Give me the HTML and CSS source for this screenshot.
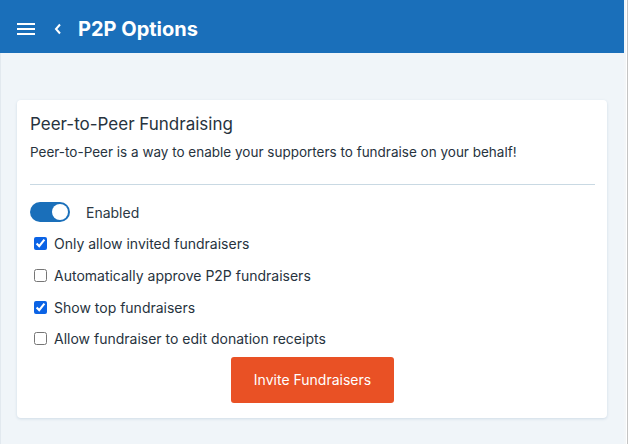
FILE: index.html
```html
<!DOCTYPE html>
<html>

<head>
    <meta charset="UTF-8">
    <title>P2P Options</title>
    <link rel="stylesheet" href="styles.css">
</head>

<body>
    <div class="frame">
        <div class="app">
            <!-- top bar -->
            <header class="topbar">
                <svg class="icon-menu" width="18" height="14" viewBox="0 0 18 14">
                    <rect x="0" y="1" width="18" height="2" fill="#fff"/>
                    <rect x="0" y="6" width="18" height="2" fill="#fff"/>
                    <rect x="0" y="11" width="18" height="2" fill="#fff"/>
                </svg>
                <svg class="icon-back" width="8" height="12" viewBox="0 0 8 12">
                    <path d="M6 1.5 L2 6 L6 10.5" fill="none" stroke="#fff" stroke-width="2"/>
                </svg>
                <h1>P2P Options</h1>
            </header>

            <main class="content">
                <section class="card">
                    <h2>Peer-to-Peer Fundraising</h2>
                    <p class="desc">Peer-to-Peer is a way to enable your supporters to fundraise on your behalf!</p>
                    <hr class="divider">

                    <div class="toggle-row">
                        <span class="toggle"><span class="knob"></span></span>
                        <span class="toggle-label">Enabled</span>
                    </div>

                    <label class="check"><input type="checkbox" checked> Only allow invited fundraisers</label>
                    <label class="check"><input type="checkbox"> Automatically approve P2P fundraisers</label>
                    <label class="check"><input type="checkbox" checked> Show top fundraisers</label>
                    <label class="check"><input type="checkbox"> Allow fundraiser to edit donation receipts</label>

                    <div class="actions">
                        <button type="button" class="btn-invite">Invite Fundraisers</button>
                    </div>
                </section>
            </main>
        </div>
        <div class="edge"></div>
    </div>
</body>

</html>
```

FILE: styles.css
```css
html, body {
    margin: 0;
    height: 100%;
}

body {
    background-color: #ffffff;
    font-family: Inter, "Noto Sans", sans-serif;
    color: #2b3844;
}

.frame {
    display: flex;
    height: 444px;
    overflow: hidden;
}

.app {
    width: 624px;
    background-color: #f0f5f9;
    border-left: 1px solid #e2e9ef;
    box-sizing: border-box;
}

.edge {
    width: 5px;
    border-left: 2px solid #f3f6f8;
    box-sizing: border-box;
}

.edge::after {
    content: "";
    display: block;
    width: 1px;
    height: 100%;
    margin-left: 1px;
    background-color: #c4c4c4;
}

.topbar {
    height: 53px;
    box-sizing: border-box;
    background-color: #1a6fba;
    display: flex;
    align-items: center;
    padding: 4px 0 0 17px;
    margin-left: -1px;
}

.icon-menu {
    display: block;
}

.icon-back {
    display: block;
    margin-left: 19px;
}

.topbar h1 {
    margin: 0 0 0 16px;
    color: #ffffff;
    font-size: 20px;
    font-weight: 700;
}

.content {
    padding: 47px 17px 0 16px;
}

.card {
    background-color: #ffffff;
    border-radius: 4px;
    box-shadow: 0 1px 3px rgba(30, 80, 130, 0.15);
    padding: 13px 12px 15px 13px;
    height: 318px;
    box-sizing: border-box;
}

.card h2 {
    margin: 0;
    font-size: 17px;
    font-weight: 400;
    line-height: 22px;
    color: #27333e;
}

.desc {
    margin: 8px 0 0;
    font-size: 13.5px;
    line-height: 18px;
    color: #27333e;
}

.divider {
    border: 0;
    border-top: 1px solid #c9d9e3;
    margin: 23px 0 0;
}

.toggle-row {
    display: flex;
    align-items: center;
    margin-top: 17px;
    height: 20px;
}

.toggle {
    width: 40px;
    height: 20px;
    border-radius: 10px;
    background-color: #1a6fba;
    display: flex;
    align-items: center;
    justify-content: flex-end;
    padding: 0 2px;
    box-sizing: border-box;
}

.knob {
    width: 16px;
    height: 16px;
    border-radius: 50%;
    background-color: #ffffff;
}

.toggle-label {
    margin-left: 16px;
    font-size: 14px;
    color: #2b3844;
}

.check {
    display: flex;
    align-items: center;
    height: 31.7px;
    font-size: 14px;
    color: #27333e;
    padding-left: 4px;
}

.check:first-of-type {
    margin-top: 6px;
}

.check input {
    width: 13px;
    height: 13px;
    margin: 0 7px 0 0;
    accent-color: #0b63e5;
}

.actions {
    display: flex;
    justify-content: center;
    margin-top: 2px;
}

.btn-invite {
    width: 163px;
    height: 46px;
    border: 0;
    border-radius: 3px;
    background-color: #e95125;
    color: #ffffff;
    font-family: Inter, "Noto Sans", sans-serif;
    font-size: 14px;
}
```
